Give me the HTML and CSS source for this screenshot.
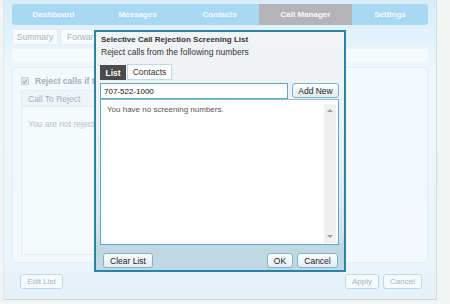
FILE: index.html
```html
<!DOCTYPE html>
<html lang="en">
<head>
    <meta charset="UTF-8">
    <title>Call Manager</title>
    <link rel="stylesheet" href="styles.css">
</head>
<body>
    <div class="page">
        <div class="nav">
            <div class="nav-tab">Dashboard</div>
            <div class="nav-tab">Messages</div>
            <div class="nav-tab">Contacts</div>
            <div class="nav-tab active">Call Manager</div>
            <div class="nav-tab">Settings</div>
        </div>
        <div class="subtabs">
            <span class="subtab">Summary</span>
            <span class="subtab wide">Forwarding</span>
        </div>
        <div class="bar"></div>
        <div class="panel">
            <div class="check-row">
                <span class="check">
                    <svg width="7" height="7" viewBox="0 0 7 7"><path d="M1 3.6 L2.8 5.4 L6 1.2" fill="none" stroke="#9aa6ae" stroke-width="1.3"/></svg>
                </span>
                <span class="clip check-label">Reject calls if the caller is on my list</span>
            </div>
            <div class="grid-head">Call To Reject</div>
            <div class="grid-body"><span class="clip body-label">You are not rejecting any calls</span></div>
        </div>
        <div class="actions">
            <button class="btn faded">Edit List</button>
            <span class="spacer"></span>
            <button class="btn faded apply">Apply</button>
            <button class="btn faded cancel">Cancel</button>
        </div>
    </div>

    <div class="dialog">
        <div class="dialog-title">Selective Call Rejection Screening List</div>
        <div class="dialog-sub">Reject calls from the following numbers</div>
        <div class="tabs">
            <span class="tab active">List</span>
            <span class="tab">Contacts</span>
        </div>
        <div class="input-row">
            <input type="text" class="number" value="707-522-1000">
            <button class="btn add">Add New</button>
        </div>
        <div class="list">
            <div class="list-text">You have no screening numbers.</div>
            <div class="scroll">
                <span class="arrow up"></span>
                <span class="arrow down"></span>
            </div>
        </div>
        <div class="dialog-footer">
            <button class="btn clear">Clear List</button>
            <span class="spacer"></span>
            <button class="btn ok">OK</button>
            <button class="btn cancel-d">Cancel</button>
        </div>
    </div>
</body>
</html>
```

FILE: styles.css
```css
body {
    margin: 0;
    font-family: "Liberation Sans", Arial, sans-serif;
    font-size: 8px;
    background-color: #f3f4f4;
}
.page {
    box-sizing: border-box;
    width: 434px;
    height: 300px;
    margin-left: 3px;
    padding: 0 8px 0 8px;
    border-left: 1px solid #e2e8eb;
    border-right: 1px solid #d3dbdf;
    border-bottom: 1px solid #cdd5d9;
    background: linear-gradient(#d6edf9 0, #eef7fc 70px, #eaf5fb 260px, #e4f1f8 300px);
}
.nav {
    display: grid;
    grid-template-columns: 83px 85px 79px 93px 1fr;
    height: 21px;
    position: relative;
    top: 4px;
    background-color: #a7d9f2;
    border-radius: 3px;
}
.nav-tab {
    display: flex;
    justify-content: center;
    align-items: center;
    color: #f4fbff;
    font-weight: bold;
}
.nav-tab.active {
    background-color: #b4b4b8;
}
.subtabs {
    display: flex;
    gap: 2px;
    margin-top: 8px;
    height: 16px;
}
.subtab {
    box-sizing: border-box;
    width: 46px;
    display: flex;
    align-items: center;
    justify-content: center;
    background-color: #f7fbfd;
    border: 1px solid #e3eef4;
    border-radius: 2px;
    color: #a9b4bb;
    font-size: 8.5px;
}
/* cut off where the dialog starts */
.subtab.wide {
    width: 34px;
    justify-content: flex-start;
    padding-left: 6px;
    border-right: none;
    overflow: hidden;
    white-space: nowrap;
}
.bar {
    height: 13px;
    margin-top: 4px;
    background-color: #f5fafd;
    border-radius: 2px;
}
.panel {
    box-sizing: border-box;
    height: 196px;
    margin-top: 5px;
    padding: 8px 8px 0 8px;
    background-color: #f3f9fd;
    border: 1px solid #e1eef5;
    border-radius: 3px;
}
.clip {
    display: block;
    overflow: hidden;
    white-space: nowrap;
}
.check-row {
    display: flex;
    align-items: center;
    gap: 6px;
    height: 10px;
    color: #a7b1b9;
    font-weight: bold;
    font-size: 8.5px;
}
.check-label {
    width: 60px;
}
.check {
    box-sizing: border-box;
    width: 8px;
    height: 8px;
    display: flex;
    align-items: center;
    justify-content: center;
    background-color: #e3e8eb;
    border: 1px solid #c9d1d6;
    border-radius: 1px;
}
.grid-head {
    box-sizing: border-box;
    width: 280px;
    height: 17px;
    margin-top: 4px;
    padding-left: 6px;
    display: flex;
    align-items: center;
    background-color: #eef5f9;
    border: 1px solid #e2edf3;
    border-radius: 2px;
    color: #a6b0b8;
    font-size: 8.5px;
}
.grid-body {
    box-sizing: border-box;
    width: 280px;
    height: 148px;
    padding: 12px 6px;
    background-color: #f5fafd;
    border: 1px solid #e3eef4;
    border-top: none;
    color: #b7c0c6;
    font-size: 8.5px;
}
.body-label {
    width: 66px;
}
.actions {
    display: flex;
    gap: 4px;
    margin-top: 11px;
    padding: 0 6px 0 8px;
}
.spacer {
    flex: 1;
}
.btn {
    box-sizing: border-box;
    height: 15px;
    padding: 0;
    font-family: "Liberation Sans", Arial, sans-serif;
    font-size: 8px;
    color: #222;
    background: linear-gradient(#fdfeff, #e2ecf1);
    border: 1px solid #7fb3cd;
    border-radius: 3px;
}
.btn.faded {
    color: #aab3ba;
    background: #f5fafc;
    border-color: #bdd9e7;
}
.btn.faded:first-child {
    width: 43px;
}
.apply {
    width: 34px;
}
.cancel {
    width: 39px;
}
.dialog {
    position: absolute;
    left: 94px;
    top: 30px;
    width: 239px;
    height: 238px;
    padding: 0 5px 0 4px;
    display: flex;
    flex-direction: column;
    border: 2px solid #2a84aa;
    background: linear-gradient(#f1f4f6 0, #e9f0f4 120px, #d4e4ec 200px, #bfd8e3 215px);
    color: #333;
}
.dialog-title {
    margin-top: 2px;
    line-height: 12px;
    font-weight: bold;
    padding-left: 1px;
}
.dialog-sub {
    line-height: 12px;
    padding-left: 1px;
    font-size: 8.5px;
}
.tabs {
    display: flex;
    gap: 1px;
    margin-top: 6px;
    height: 16px;
}
.tab {
    box-sizing: border-box;
    width: 45px;
    display: flex;
    align-items: center;
    justify-content: center;
    background-color: #fff;
    border: 1px solid #b9dced;
    font-size: 8.5px;
}
.tab.active {
    width: 26px;
    margin-top: 1px;
    height: 15px;
    background-color: #4b4b4b;
    border-color: #4b4b4b;
    color: #fff;
    font-weight: bold;
}
.input-row {
    display: flex;
    gap: 4px;
    margin-top: 3px;
    height: 16px;
}
.number {
    flex: 1;
    min-width: 0;
    box-sizing: border-box;
    height: 16px;
    margin: 0;
    padding: 0 3px;
    font-family: "Liberation Sans", Arial, sans-serif;
    font-size: 8px;
    color: #111;
    border: 1px solid #5fa6c9;
    outline: none;
}
.add {
    width: 47px;
    font-size: 8.5px;
}
.list {
    box-sizing: border-box;
    height: 146px;
    display: flex;
    background-color: #fff;
    border: 1px solid #5fa6c9;
    border-top-color: #8bbfd8;
}
.list-text {
    flex: 1;
    padding: 5px 6px;
    color: #555;
}
.scroll {
    width: 12px;
    margin: 4px 2px 1px 0;
    display: flex;
    flex-direction: column;
    justify-content: space-between;
    align-items: center;
    padding: 5px 0;
    box-sizing: border-box;
    background-color: #f0f0f0;
}
.arrow {
    width: 0;
    height: 0;
    border-left: 3px solid transparent;
    border-right: 3px solid transparent;
}
.arrow.up {
    border-bottom: 3px solid #a0a0a0;
}
.arrow.down {
    border-top: 3px solid #a0a0a0;
}
.dialog-footer {
    display: flex;
    gap: 4px;
    height: 25px;
    box-sizing: border-box;
    padding: 8px 1px 0 3px;
}
.clear {
    width: 50px;
    font-size: 8.5px;
}
.ok {
    width: 26px;
    font-size: 8.5px;
}
.cancel-d {
    width: 41px;
    font-size: 8.5px;
}
```
